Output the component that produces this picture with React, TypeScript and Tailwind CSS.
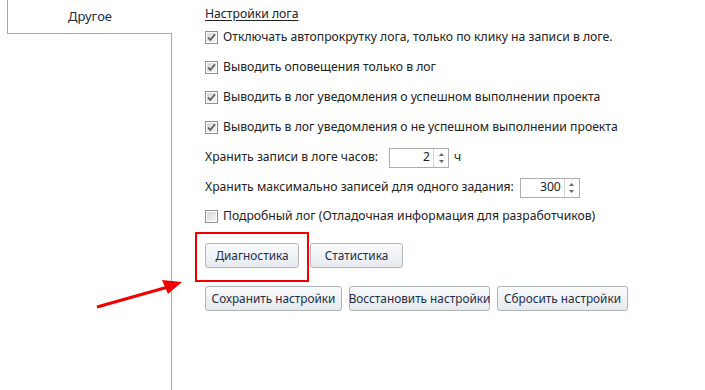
import React from 'react';

const font = { fontFamily: '"Noto Sans", "Open Sans", sans-serif' };

const CheckBox: React.FC<{ checked?: boolean }> = ({ checked }) => (
  <svg width="13" height="13" viewBox="0 0 13 13" className="shrink-0">
    <defs>
      <linearGradient id={checked ? 'cbg1' : 'cbg0'} x1="0" y1="0" x2="1" y2="1">
        <stop offset="0" stopColor="#d6d6d6" />
        <stop offset="1" stopColor="#f4f4f4" />
      </linearGradient>
    </defs>
    <rect x="0.5" y="0.5" width="12" height="12" fill="#fff" stroke="#8e8f8f" />
    <rect x="2" y="2" width="9" height="9" fill={`url(#${checked ? 'cbg1' : 'cbg0'})`} />
    {checked && (
      <path d="M3 6.5 L5.3 9 L10 3.2" fill="none" stroke="#5a5a5a" strokeWidth="1.7" />
    )}
  </svg>
);

const CheckRow: React.FC<{ label: string; checked?: boolean; h?: string }> = ({ label, checked, h = 'h-[30px]' }) => (
  <div className={`${h} flex items-center gap-[5px]`}>
    <CheckBox checked={checked} />
    <span className="text-[12.2px] text-[#222] whitespace-nowrap">{label}</span>
  </div>
);

const Spin: React.FC<{ value: string; className?: string }> = ({ value, className = '' }) => (
  <div className={`flex h-[20px] w-[60px] border border-[#abadb3] bg-white ${className}`}>
    <div className="flex-1 flex items-center justify-end pr-[3px] text-[12.2px] text-[#222]">{value}</div>
    <div className="w-[15px] border-l border-[#d5d5d5] flex flex-col items-center justify-center gap-[4px]">
      <svg width="5" height="3" viewBox="0 0 5 3"><path d="M0 3 L2.5 0 L5 3 Z" fill="#666" /></svg>
      <svg width="5" height="3" viewBox="0 0 5 3"><path d="M0 0 L2.5 3 L5 0 Z" fill="#666" /></svg>
    </div>
  </div>
);

const Btn: React.FC<{ label: string; w: string }> = ({ label, w }) => (
  <button
    className={`${w} h-[25px] shrink-0 whitespace-nowrap rounded-[3px] border border-[#b0b5bb] bg-gradient-to-b from-[#fafbfc] to-[#e6eaef] text-[11.8px] text-[#1f2f47] flex items-center justify-center`}
  >
    {label}
  </button>
);

export default function App() {
  return (
    <div className="relative w-[705px] h-[390px] bg-white flex overflow-hidden" style={font}>
      <div className="w-[172px] flex flex-col shrink-0">
        <div className="ml-[7px] w-[165px] h-[34px] border-l border-b border-[#a7a9ae] flex items-center justify-center text-[13px] text-[#1c2a44]">
          Другое
        </div>
        <div className="flex-1 border-r border-[#a7a9ae]" />
      </div>

      <div className="pl-[33px] pt-[6px] flex flex-col">
        <div className="h-[16px] flex items-center">
          <span className="text-[12.2px] text-[#222] underline underline-offset-2">Настройки лога</span>
        </div>
        <CheckRow checked label="Отключать автопрокрутку лога, только по клику на записи в логе." />
        <CheckRow checked label="Выводить оповещения только в лог" />
        <CheckRow checked label="Выводить в лог уведомления о успешном выполнении проекта" />
        <CheckRow checked label="Выводить в лог уведомления о не успешном выполнении проекта" />
        <div className="h-[31px] flex items-center text-[12.2px] text-[#222]">
          <span>Хранить записи в логе часов:</span>
          <Spin value="2" className="ml-[11px]" />
          <span className="ml-[5px]">ч</span>
        </div>
        <div className="h-[29px] flex items-center gap-[6px] text-[12.2px] text-[#222]">
          <span>Хранить максимально записей для одного задания:</span>
          <Spin value="300" />
        </div>
        <CheckRow h="h-[29px]" label="Подробный лог (Отладочная информация для разработчиков)" />
        <div className="mt-[12px] flex gap-[11px]">
          <Btn label="Диагностика" w="w-[94px]" />
          <Btn label="Статистика" w="w-[93px]" />
        </div>
        <div className="mt-[18px] flex gap-[7px]">
          <Btn label="Сохранить настройки" w="w-[137px]" />
          <Btn label="Восстановить настройки" w="w-[141px]" />
          <Btn label="Сбросить настройки" w="w-[131px]" />
        </div>
      </div>

      <div className="absolute left-[195px] top-[232px] w-[114px] h-[50px] border-2 border-[#f00000]" />
      <svg className="absolute left-0 top-0" width="705" height="390" viewBox="0 0 705 390">
        <line x1="97" y1="307" x2="168" y2="287" stroke="#f00000" strokeWidth="3" />
        <path d="M182 282 L162 280 L168 294 Z" fill="#f00000" />
      </svg>
    </div>
  );
}
